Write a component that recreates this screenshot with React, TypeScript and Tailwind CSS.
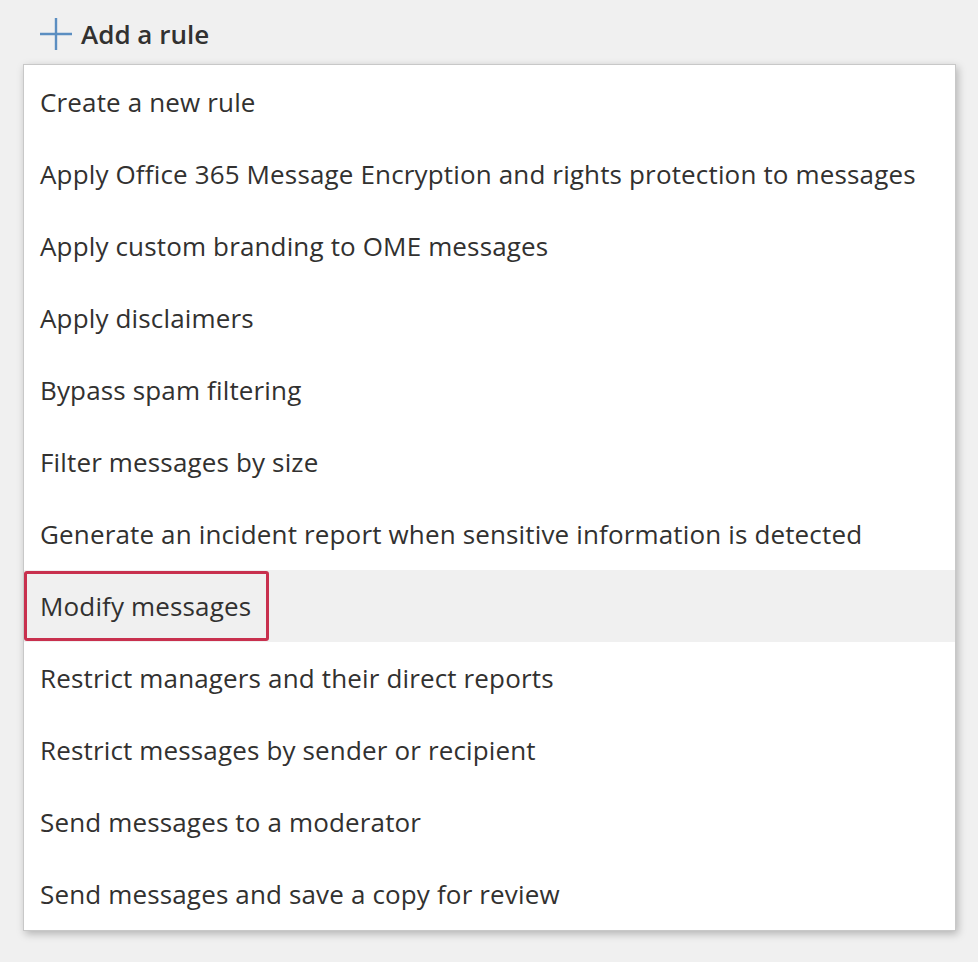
import React from "react";

const rules = [
  "Create a new rule",
  "Apply Office 365 Message Encryption and rights protection to messages",
  "Apply custom branding to OME messages",
  "Apply disclaimers",
  "Bypass spam filtering",
  "Filter messages by size",
  "Generate an incident report when sensitive information is detected",
  "Modify messages",
  "Restrict managers and their direct reports",
  "Restrict messages by sender or recipient",
  "Send messages to a moderator",
  "Send messages and save a copy for review",
];

const PlusIcon = () => (
  <svg width="32" height="32" viewBox="0 0 32 32">
    <path d="M16 0v32M0 16h32" stroke="#5b8ec1" strokeWidth="2.4" fill="none" />
  </svg>
);

export default function App() {
  return (
    <div
      className="w-[978px] h-[962px] bg-[#f0f0f0] text-[#323130]"
      style={{ fontFamily: '"Open Sans", "Noto Sans", sans-serif' }}
    >
      <div className="flex items-center gap-[9px] pl-[40px] pt-[18px] h-[50px]">
        <PlusIcon />
        <span className="text-[26px] font-semibold leading-none">Add a rule</span>
      </div>
      <div className="ml-[23px] mt-[14px] w-[933px] border border-[#c8c8c8] bg-white shadow-[2px_3px_8px_rgba(0,0,0,0.25)] pt-px">
        {rules.map((r) => {
          const selected = r === "Modify messages";
          return (
            <div
              key={r}
              className={`h-[72px] flex items-center text-[26px] tracking-[0.15px] ${selected ? "bg-[#f0f0f0]" : ""}`}
            >
              {selected ? (
                <div className="h-[70px] w-[245px] flex items-center pl-[13px] border-[3px] border-[#c8304e] rounded-[3px]">
                  <span>{r}</span>
                </div>
              ) : (
                <span className="pl-[16px]">{r}</span>
              )}
            </div>
          );
        })}
      </div>
    </div>
  );
}
